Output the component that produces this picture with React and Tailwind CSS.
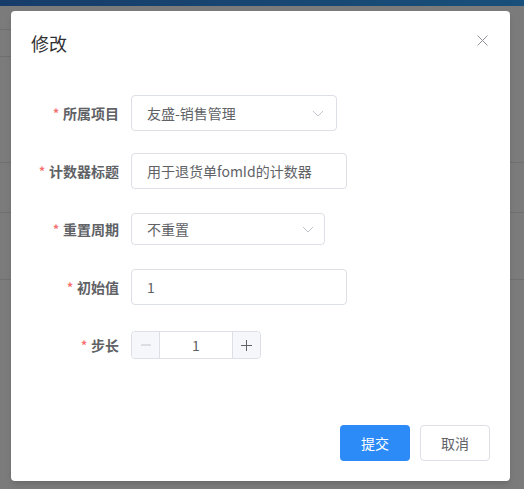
import React from 'react';

const font = { fontFamily: '"Noto Sans CJK SC", "Noto Sans", sans-serif' };

function Chevron() {
  return (
    <svg width="12" height="7" viewBox="0 0 12 7" fill="none" className="shrink-0">
      <path d="M1 1l5 5 5-5" stroke="#c0c4cc" strokeWidth="1" />
    </svg>
  );
}

function Label({ children }) {
  return (
    <div className="w-[100px] shrink-0 pr-3 flex items-center justify-end text-sm font-bold text-[#606266]">
      <span className="text-[#f56c6c] mr-1 text-xs">*</span>
      {children}
    </div>
  );
}

function Row({ label, children }) {
  return (
    <div className="flex items-center h-9 mb-[22px]">
      <Label>{label}</Label>
      {children}
    </div>
  );
}

export default function App() {
  return (
    <div className="relative h-[489px] w-[524px] overflow-hidden bg-[#7b7b7b]" style={font}>
      {/* page behind the mask */}
      <div className="h-[6px] bg-gradient-to-r from-[#173c69] to-[#18507b]" />
      <div className="h-[24px] border-b border-[#6f6f6f] w-[40px]" />
      <div className="h-[27px] border-b border-[#6f6f6f] w-[40px]" />
      <div className="h-[106px] border-b border-[#707070]" />
      <div className="h-[50px] border-b border-[#707070]" />
      <div className="h-[67px] border-b border-[#707070]" />

      {/* dialog */}
      <div className="absolute left-[11px] top-[11px] w-[499px] bg-white rounded-sm shadow-md">
        <div className="flex justify-between pt-5 px-5 pb-[10px]">
          <span className="text-lg leading-6 text-[#303133]">修改</span>
          <svg width="11" height="11" viewBox="0 0 11 11" className="mt-[4px] mr-[2px]">
            <path d="M0.5 0.5l10 10M10.5 0.5l-10 10" stroke="#909399" strokeWidth="1" />
          </svg>
        </div>

        <div className="px-5 py-[30px]">
          <Row label="所属项目">
            <div className="w-[206px] h-9 border border-[#dcdfe6] rounded flex items-center justify-between pl-[15px] pr-3 text-sm text-[#606266]">
              <span>友盛-销售管理</span>
              <Chevron />
            </div>
          </Row>
          <Row label="计数器标题">
            <div className="w-[216px] h-9 border border-[#dcdfe6] rounded flex items-center pl-[15px] text-sm text-[#606266]">
              用于退货单fomId的计数器
            </div>
          </Row>
          <Row label="重置周期">
            <div className="w-[194px] h-8 border border-[#dcdfe6] rounded flex items-center justify-between pl-[15px] pr-[10px] text-sm text-[#606266]">
              <span>不重置</span>
              <Chevron />
            </div>
          </Row>
          <Row label="初始值">
            <div className="w-[216px] h-9 border border-[#dcdfe6] rounded flex items-center pl-[15px] text-sm text-[#606266]">
              1
            </div>
          </Row>
          <Row label="步长">
            <div className="w-[130px] h-7 border border-[#dcdfe6] rounded flex text-sm text-[#606266] overflow-hidden">
              <div className="w-7 shrink-0 bg-[#f5f7fa] border-r border-[#dcdfe6] flex items-center justify-center">
                <svg width="10" height="10" viewBox="0 0 10 10">
                  <path d="M0 5h10" stroke="#c0c4cc" strokeWidth="1" />
                </svg>
              </div>
              <div className="flex-1 flex items-center justify-center">1</div>
              <div className="w-7 shrink-0 bg-[#f5f7fa] border-l border-[#dcdfe6] flex items-center justify-center">
                <svg width="11" height="11" viewBox="0 0 11 11">
                  <path d="M0 5.5h11M5.5 0v11" stroke="#606266" strokeWidth="1" />
                </svg>
              </div>
            </div>
          </Row>
        </div>

        <div className="flex justify-end gap-[10px] px-5 pt-[10px] pb-5">
          <button className="w-[70px] h-9 rounded bg-[#2d8bf8] text-white text-sm">提交</button>
          <button className="w-[70px] h-9 rounded border border-[#dcdfe6] bg-white text-[#606266] text-sm">取消</button>
        </div>
      </div>
    </div>
  );
}
